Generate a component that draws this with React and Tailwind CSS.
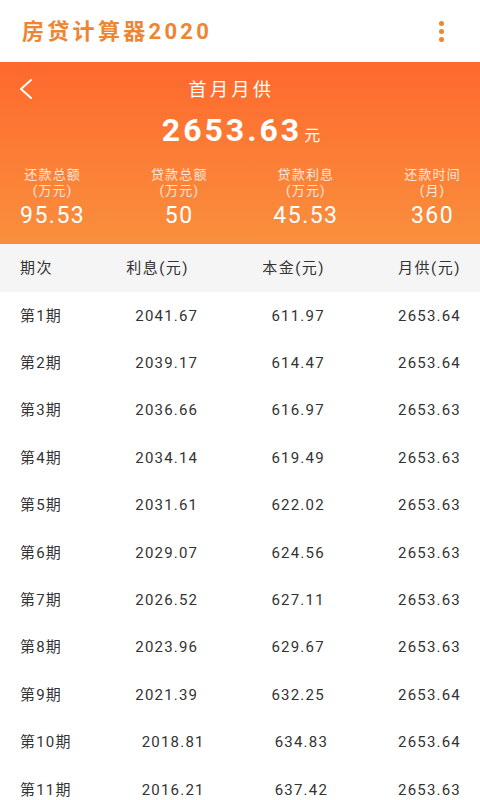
import React from "react";

const rows = [
  ["第1期", "2041.67", "611.97", "2653.64"],
  ["第2期", "2039.17", "614.47", "2653.64"],
  ["第3期", "2036.66", "616.97", "2653.63"],
  ["第4期", "2034.14", "619.49", "2653.63"],
  ["第5期", "2031.61", "622.02", "2653.63"],
  ["第6期", "2029.07", "624.56", "2653.63"],
  ["第7期", "2026.52", "627.11", "2653.63"],
  ["第8期", "2023.96", "629.67", "2653.63"],
  ["第9期", "2021.39", "632.25", "2653.64"],
  ["第10期", "2018.81", "634.83", "2653.64"],
  ["第11期", "2016.21", "637.42", "2653.63"],
];

const stats = [
  ["还款总额", "(万元)", "95.53"],
  ["贷款总额", "(万元)", "50"],
  ["贷款利息", "(万元)", "45.53"],
  ["还款时间", "(月)", "360"],
];

export default function App() {
  return (
    <div
      className="w-[480px] h-[800px] overflow-hidden bg-white"
      style={{ fontFamily: 'Roboto, "Noto Sans CJK SC", sans-serif' }}
    >
      <div className="h-[62px] flex items-center justify-between pl-[22px] pr-[36px] bg-white">
        <div className="text-[22px] font-bold text-[#ee8533] tracking-[3.3px]">房贷计算器2020</div>
        <div className="flex flex-col gap-[3px] items-center">
          <span className="w-[5px] h-[5px] rounded-full bg-[#ee8533]" />
          <span className="w-[5px] h-[5px] rounded-full bg-[#ee8533]" />
          <span className="w-[5px] h-[5px] rounded-full bg-[#ee8533]" />
        </div>
      </div>
      <div className="h-[182px] bg-gradient-to-b from-[#fe682d] to-[#f98f3d] text-white">
        <div className="relative h-[54px] flex items-center justify-center pr-[17px]">
          <svg className="absolute left-[18px] top-[16px]" width="16" height="22" viewBox="0 0 16 22">
            <path d="M13 2 L3 11 L13 20" fill="none" stroke="white" strokeWidth="2" strokeLinecap="round" strokeLinejoin="round" />
          </svg>
          <div className="text-[18px] tracking-[3.5px]">首月月供</div>
        </div>
        <div className="flex items-end justify-center h-[32px] -mt-[2px] pl-[2px]">
          <span className="text-[32px] font-bold leading-none tracking-[3px]">2653.63</span>
          <span className="text-[16px] leading-none ml-[2px] mb-[2px]">元</span>
        </div>
        <div className="flex justify-between pl-[20px] pr-[19px] mt-[21px]">
          {stats.map(([a, b, c]) => (
            <div key={a} className="flex flex-col items-center">
              <div className="text-[13px] leading-[16px] text-white/80 tracking-[1.2px]">{a}</div>
              <div className="text-[13px] leading-[16px] text-white/80 tracking-[1.2px]">{b}</div>
              <div className="text-[23px] leading-[26px] mt-[4px] tracking-[1.5px]">{c}</div>
            </div>
          ))}
        </div>
      </div>
      <div className="h-[48px] bg-[#f5f5f5] flex items-center justify-between pl-[20px] pr-[19px] text-[15px] text-[#333] tracking-[1.5px]">
        <span>期次</span>
        <span>利息(元)</span>
        <span>本金(元)</span>
        <span>月供(元)</span>
      </div>
      {rows.map((r) => (
        <div key={r[0]} className="h-[47.4px] flex items-center justify-between pl-[20px] pr-[19px] text-[15px] leading-[18px] text-[#333] tracking-[1.2px]">
          {r.map((c, i) => (
            <span key={i}>{c}</span>
          ))}
        </div>
      ))}
    </div>
  );
}
